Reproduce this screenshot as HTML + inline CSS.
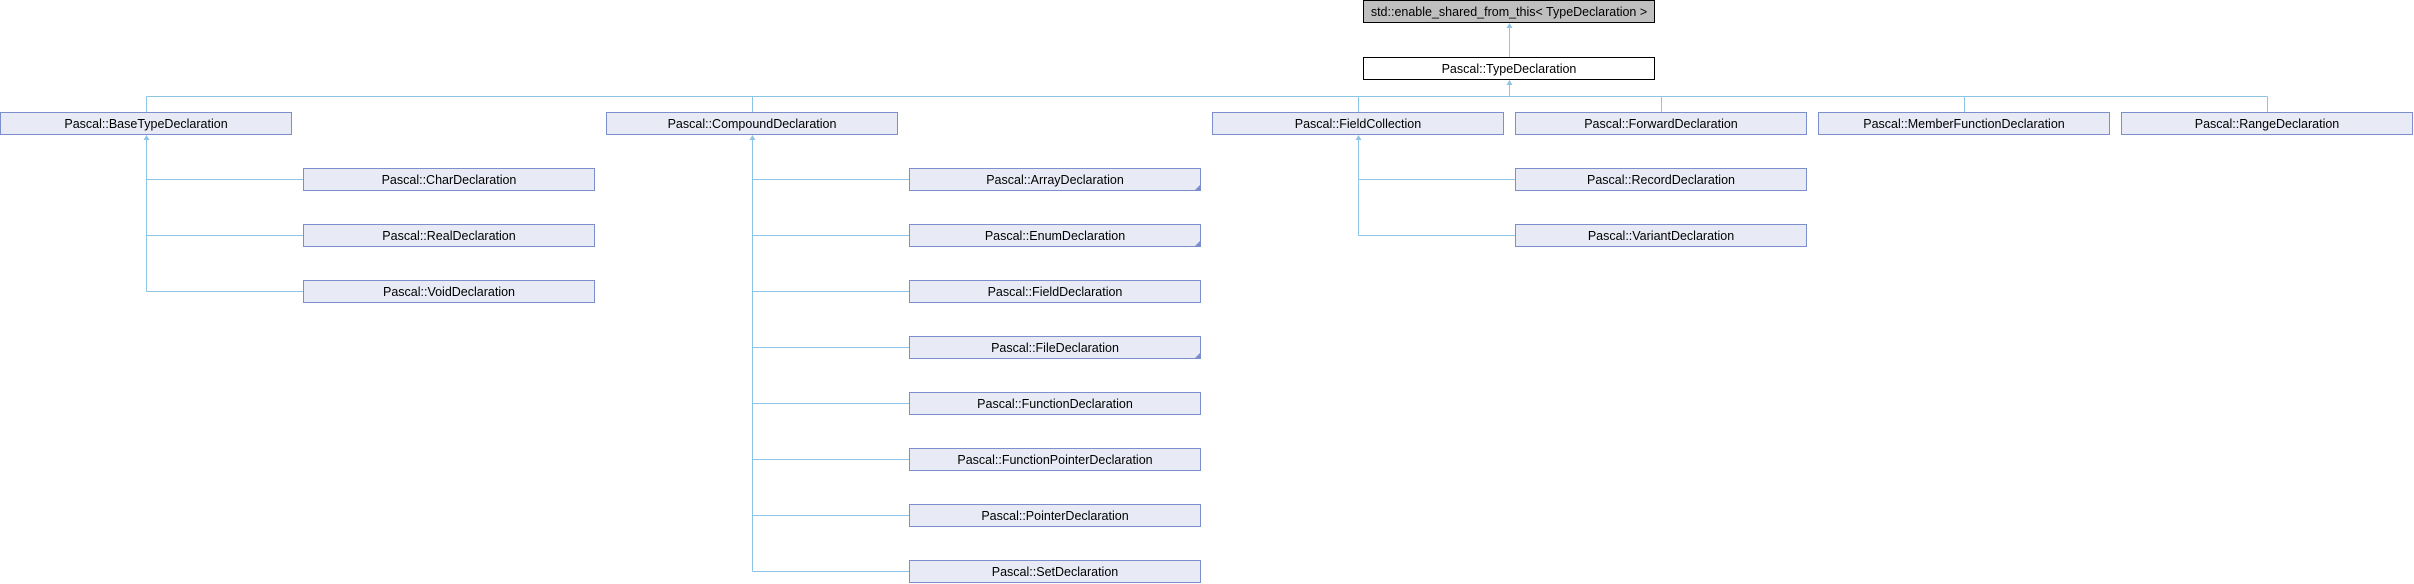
<!DOCTYPE html>
<html><head><meta charset="utf-8"><style>
html,body{margin:0;padding:0;background:#fff;}
svg{display:block;}
text{font-family:"Liberation Sans",sans-serif;font-size:12.5px;fill:#000;}
</style></head><body>
<svg width="2414" height="584" viewBox="0 0 2414 584" xmlns="http://www.w3.org/2000/svg">
<g stroke="#8cc4e6" stroke-width="1" fill="none" shape-rendering="crispEdges">
<line x1="1509.5" y1="27" x2="1509.5" y2="57"/>
<line x1="1509.5" y1="84" x2="1509.5" y2="96.5"/>
<line x1="146.5" y1="96.5" x2="2267.5" y2="96.5"/>
<line x1="146.5" y1="96.5" x2="146.5" y2="112"/>
<line x1="752.5" y1="96.5" x2="752.5" y2="112"/>
<line x1="1358.5" y1="96.5" x2="1358.5" y2="112"/>
<line x1="1661.5" y1="96.5" x2="1661.5" y2="112"/>
<line x1="1964.5" y1="96.5" x2="1964.5" y2="112"/>
<line x1="2267.5" y1="96.5" x2="2267.5" y2="112"/>
<line x1="146.5" y1="139" x2="146.5" y2="291.5"/>
<line x1="146.5" y1="179.5" x2="303" y2="179.5"/>
<line x1="146.5" y1="235.5" x2="303" y2="235.5"/>
<line x1="146.5" y1="291.5" x2="303" y2="291.5"/>
<line x1="752.5" y1="139" x2="752.5" y2="571.5"/>
<line x1="752.5" y1="179.5" x2="909" y2="179.5"/>
<line x1="752.5" y1="235.5" x2="909" y2="235.5"/>
<line x1="752.5" y1="291.5" x2="909" y2="291.5"/>
<line x1="752.5" y1="347.5" x2="909" y2="347.5"/>
<line x1="752.5" y1="403.5" x2="909" y2="403.5"/>
<line x1="752.5" y1="459.5" x2="909" y2="459.5"/>
<line x1="752.5" y1="515.5" x2="909" y2="515.5"/>
<line x1="752.5" y1="571.5" x2="909" y2="571.5"/>
<line x1="1358.5" y1="139" x2="1358.5" y2="235.5"/>
<line x1="1358.5" y1="179.5" x2="1515" y2="179.5"/>
<line x1="1358.5" y1="235.5" x2="1515" y2="235.5"/>
</g>
<g fill="#8cc4e6">
<polygon points="1509.5,23 1506.5,28 1512.5,28"/>
<polygon points="1509.5,80 1506.5,85 1512.5,85"/>
<polygon points="146.5,135 143.5,140 149.5,140"/>
<polygon points="752.5,135 749.5,140 755.5,140"/>
<polygon points="1358.5,135 1355.5,140 1361.5,140"/>
</g>
<g shape-rendering="crispEdges">
<rect x="1363.5" y="0.5" width="291" height="22" fill="#bfbfbf" stroke="#000"/>
<rect x="1363.5" y="57.5" width="291" height="22" fill="#fff" stroke="#000"/>
<g fill="#e8ebf5" stroke="#7b8fca">
<rect x="0.5" y="112.5" width="291" height="22"/>
<rect x="606.5" y="112.5" width="291" height="22"/>
<rect x="1212.5" y="112.5" width="291" height="22"/>
<rect x="1515.5" y="112.5" width="291" height="22"/>
<rect x="1818.5" y="112.5" width="291" height="22"/>
<rect x="2121.5" y="112.5" width="291" height="22"/>
<rect x="303.5" y="168.5" width="291" height="22"/>
<rect x="303.5" y="224.5" width="291" height="22"/>
<rect x="303.5" y="280.5" width="291" height="22"/>
<rect x="909.5" y="168.5" width="291" height="22"/>
<rect x="909.5" y="224.5" width="291" height="22"/>
<rect x="909.5" y="280.5" width="291" height="22"/>
<rect x="909.5" y="336.5" width="291" height="22"/>
<rect x="909.5" y="392.5" width="291" height="22"/>
<rect x="909.5" y="448.5" width="291" height="22"/>
<rect x="909.5" y="504.5" width="291" height="22"/>
<rect x="909.5" y="560.5" width="291" height="22"/>
<rect x="1515.5" y="168.5" width="291" height="22"/>
<rect x="1515.5" y="224.5" width="291" height="22"/>
</g>
</g>
<g fill="#7b8fca">
<polygon points="1200,185 1200,190 1195,190"/>
<polygon points="1200,241 1200,246 1195,246"/>
<polygon points="1200,353 1200,358 1195,358"/>
</g>
<g text-anchor="middle">
<text x="1509" y="16">std::enable_shared_from_this&lt; TypeDeclaration &gt;</text>
<text x="1509" y="73">Pascal::TypeDeclaration</text>
<text x="146" y="128">Pascal::BaseTypeDeclaration</text>
<text x="752" y="128">Pascal::CompoundDeclaration</text>
<text x="1358" y="128">Pascal::FieldCollection</text>
<text x="1661" y="128">Pascal::ForwardDeclaration</text>
<text x="1964" y="128">Pascal::MemberFunctionDeclaration</text>
<text x="2267" y="128">Pascal::RangeDeclaration</text>
<text x="449" y="184">Pascal::CharDeclaration</text>
<text x="449" y="240">Pascal::RealDeclaration</text>
<text x="449" y="296">Pascal::VoidDeclaration</text>
<text x="1055" y="184">Pascal::ArrayDeclaration</text>
<text x="1055" y="240">Pascal::EnumDeclaration</text>
<text x="1055" y="296">Pascal::FieldDeclaration</text>
<text x="1055" y="352">Pascal::FileDeclaration</text>
<text x="1055" y="408">Pascal::FunctionDeclaration</text>
<text x="1055" y="464">Pascal::FunctionPointerDeclaration</text>
<text x="1055" y="520">Pascal::PointerDeclaration</text>
<text x="1055" y="576">Pascal::SetDeclaration</text>
<text x="1661" y="184">Pascal::RecordDeclaration</text>
<text x="1661" y="240">Pascal::VariantDeclaration</text>
</g>
</svg>
</body></html>
